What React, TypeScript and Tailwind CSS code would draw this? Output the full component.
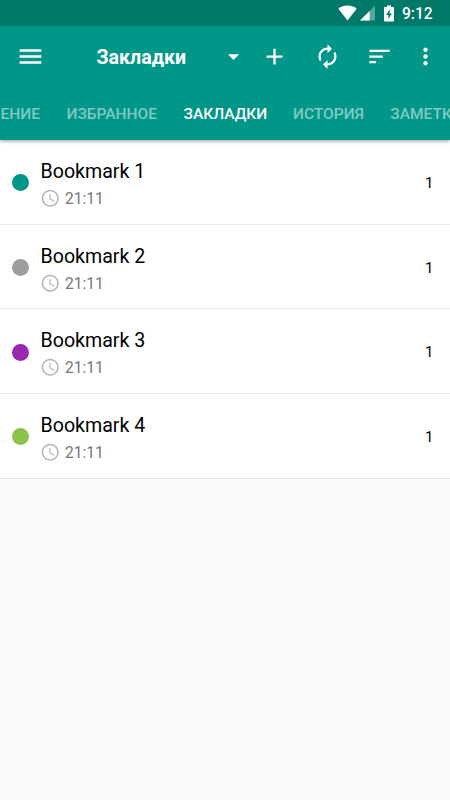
import React from "react";

const bookmarks = [
  { title: "Bookmark 1", dot: "bg-[#009688]" },
  { title: "Bookmark 2", dot: "bg-[#9e9e9e]" },
  { title: "Bookmark 3", dot: "bg-[#9c27b0]" },
  { title: "Bookmark 4", dot: "bg-[#8bc34a]" },
];

function Icon({ d, className }: { d: string; className: string }) {
  return (
    <svg viewBox="0 0 24 24" fill="currentColor" className={`shrink-0 ${className}`}>
      <path d={d} />
    </svg>
  );
}

function StatusBar() {
  return (
    <div className="flex h-[26px] shrink-0 items-center bg-[#00796b] pl-[338px]">
      <svg viewBox="0 0 19 16" fill="currentColor" className="h-4 w-[19px] shrink-0">
        <path d="M.3 3.8C5.5-.5 13.5-.5 18.7 3.8L9.5 15.5Z" />
      </svg>
      <svg viewBox="0 0 15 16" fill="currentColor" className="ml-[3px] h-4 w-[15px] shrink-0">
        <path d="M15 .8V15.5H0Z" opacity=".35" />
        <path d="M9.700 6V15.500H0Z" />
      </svg>
      <svg viewBox="0 0 10 17" fill="currentColor" className="ml-[9px] h-[17px] w-[10px] shrink-0">
        <path d="M3 .5h4V2h2.2q.8 0 .8.8v12.9q0 .8-.8.8H.8q-.8 0-.8-.8V2.8Q0 2 .8 2H3Z" />
        <path d="M5.700 4.200 2.200 10h2.200v4.200L7.900 8.500H5.700Z" fill="#00796b" />
      </svg>
      <span className="ml-2 pt-[3px] text-[15.600px] leading-none font-medium">9:12</span>
    </div>
  );
}

function Toolbar() {
  return (
    <div className="flex h-[61px] items-center">
      <Icon className="ml-[16px] size-[29px]" d="M3 18h18v-2H3v2zm0-5h18v-2H3v2zm0-7v2h18V6H3z" />
      <h1 className="ml-[51.500px] w-[123.500px] pt-0.5 text-[19.600px] leading-6 font-bold">Закладки</h1>
      <Icon className="size-[27px]" d="m7 10 5 5 5-5z" />
      <Icon className="ml-[14px] size-[27px]" d="M19 13h-6v6h-2v-6H5v-2h6V5h2v6h6v2z" />
      <Icon
        className="ml-[25.500px] size-[27px]"
        d="M12 6v3l4-4-4-4v3c-4.42 0-8 3.58-8 8 0 1.57.46 3.03 1.24 4.26L6.7 14.8c-.45-.83-.7-1.79-.7-2.8 0-3.31 2.69-6 6-6zm6.76 1.74L17.3 9.2c.44.84.7 1.79.7 2.8 0 3.31-2.69 6-6 6v-3l-4 4 4 4v-3c4.42 0 8-3.58 8-8 0-1.57-.46-3.03-1.24-4.26z"
      />
      <Icon className="ml-[25.500px] size-[27px]" d="M3 18h6v-2H3v2zM3 6v2h18V6H3zm0 7h12v-2H3v2z" />
      <Icon
        className="ml-[19px] size-[27px]"
        d="M12 8c1.100 0 2-.9 2-2s-.9-2-2-2-2 .9-2 2 .9 2 2 2zm0 2c-1.100 0-2 .9-2 2s.9 2 2 2 2-.9 2-2-.9-2-2-2zm0 6c-1.100 0-2 .9-2 2s.9 2 2 2 2-.9 2-2-.9-2-2-2z"
      />
    </div>
  );
}

function Tabs() {
  return (
    <div className="flex h-[53px] items-center overflow-hidden pt-[3px] pl-[0.500px] text-[15.500px] font-medium whitespace-nowrap text-white/50">
      <span className="w-[66px] shrink-0">ЕНИЕ</span>
      <span className="w-[117px] shrink-0">ИЗБРАННОЕ</span>
      <span className="w-[109.500px] shrink-0 text-white">ЗАКЛАДКИ</span>
      <span className="w-[97.300px] shrink-0">ИСТОРИЯ</span>
      <span className="shrink-0">ЗАМЕТКИ</span>
    </div>
  );
}

export default function App() {
  return (
    <div className="flex h-[800px] w-[450px] flex-col overflow-hidden bg-[#fafafa] font-[Roboto,sans-serif] text-black">
      <header className="relative text-white shadow-[0_1px_4px_rgba(0,0,0,0.4)]">
        <StatusBar />
        <div className="bg-[#009688]">
          <Toolbar />
          <Tabs />
        </div>
      </header>
      <main>
        {bookmarks.map((b) => (
          <div
            key={b.title}
            className="flex h-[84.700px] items-center border-b border-[#e8e8e8] bg-white pt-[2px] pr-[16.500px] pl-3"
          >
            <span className={`size-[17px] shrink-0 rounded-full ${b.dot}`} />
            <div className="ml-[11.500px] flex-1 pt-[5px]">
              <div className="text-[19.600px] leading-[26px]">{b.title}</div>
              <div className="flex items-center text-[15.600px] leading-[26px] text-[#757575]">
                <Icon
                  className="-ml-[0.500px] size-[20.500px] text-[#b4b4b4]"
                  d="M11.990 2C6.470 2 2 6.480 2 12s4.470 10 9.990 10C17.520 22 22 17.520 22 12S17.520 2 11.990 2zM12 20.200c-4.530 0-8.200-3.670-8.200-8.200s3.670-8.200 8.200-8.200 8.200 3.670 8.200 8.200-3.670 8.200-8.200 8.200zM12.400 7H11v6l5.200 3.100.7-1.200-4.500-2.700z"
                />
                <span className="ml-[4.500px] pt-px">21:11</span>
              </div>
            </div>
            <span className="pt-px text-[15px]">1</span>
          </div>
        ))}
      </main>
    </div>
  );
}
